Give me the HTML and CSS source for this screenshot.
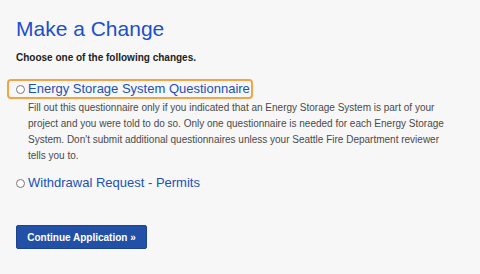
FILE: index.html
```html
<!DOCTYPE html>
<html lang="en">
<head>
  <meta charset="UTF-8" />
  <meta name="viewport" content="width=device-width, initial-scale=1.0"/>
  <title>Make a Change</title>
  <link rel="stylesheet" href="styles.css">
</head>
<body>

<div class="pagina">
  <h1 class="titulo">Make a Change</h1>
  <p class="instruccion">Choose one of the following changes.</p>

  <!-- Opciones -->
  <div class="opcion">
    <label class="fila foco">
      <span class="radio"></span>
      <span class="enlace">Energy Storage System Questionnaire</span>
    </label>
    <p class="descripcion">Fill out this questionnaire only if you indicated that an Energy Storage System is part of your project and you were told to do so. Only one questionnaire is needed for each Energy Storage System. Don't submit additional questionnaires unless your Seattle Fire Department reviewer tells you to.</p>
  </div>

  <div class="opcion">
    <label class="fila">
      <span class="radio"></span>
      <span class="enlace">Withdrawal Request - Permits</span>
    </label>
  </div>

  <button class="btn">Continue Application &raquo;</button>
</div>

</body>
</html>
```

FILE: styles.css
```css
* { margin: 0; padding: 0; box-sizing: border-box; }
body {
  background-color: #f7f7f7;
  font-family: "Liberation Sans", Arial, sans-serif;
  color: #444;
}

.pagina {
  padding: 16px 16px 0 16px;
  width: 460px;
}

.titulo {
  font-size: 21px;
  font-weight: normal;
  color: #1b4fcc;
  line-height: 26px;
}

.instruccion {
  font-size: 10px;
  font-weight: bold;
  color: #222;
  margin-top: 9px;
  line-height: 14px;
}

.opcion {
  margin-top: 14px;
}

.fila {
  display: inline-flex;
  align-items: center;
  gap: 3px;
  height: 20px;
  line-height: 16px;
}

.foco {
  margin-left: -9px;
  padding: 0 1px 0 7px;
  border: 2px solid #f5a347;
  border-radius: 4px;
}

.radio {
  width: 9px;
  height: 9px;
  border: 1px solid #777;
  border-radius: 50%;
  background: #fff;
}

.enlace {
  font-size: 13px;
  color: #2150b8;
}

.descripcion {
  font-size: 10px;
  line-height: 16px;
  color: #4a4a4a;
  padding-left: 12px;
  width: 440px;
  margin-top: 1px;
}

.opcion + .opcion {
  margin-top: 9px;
}

.btn {
  display: block;
  margin-top: 32px;
  background-color: #2150a6;
  color: white;
  border: 1px solid #1a4390;
  border-radius: 2px;
  font-family: "Liberation Sans", Arial, sans-serif;
  font-weight: bold;
  font-size: 10px;
  height: 24px;
  width: 131px;
  padding: 0 10px;
  text-align: center;
}
```
